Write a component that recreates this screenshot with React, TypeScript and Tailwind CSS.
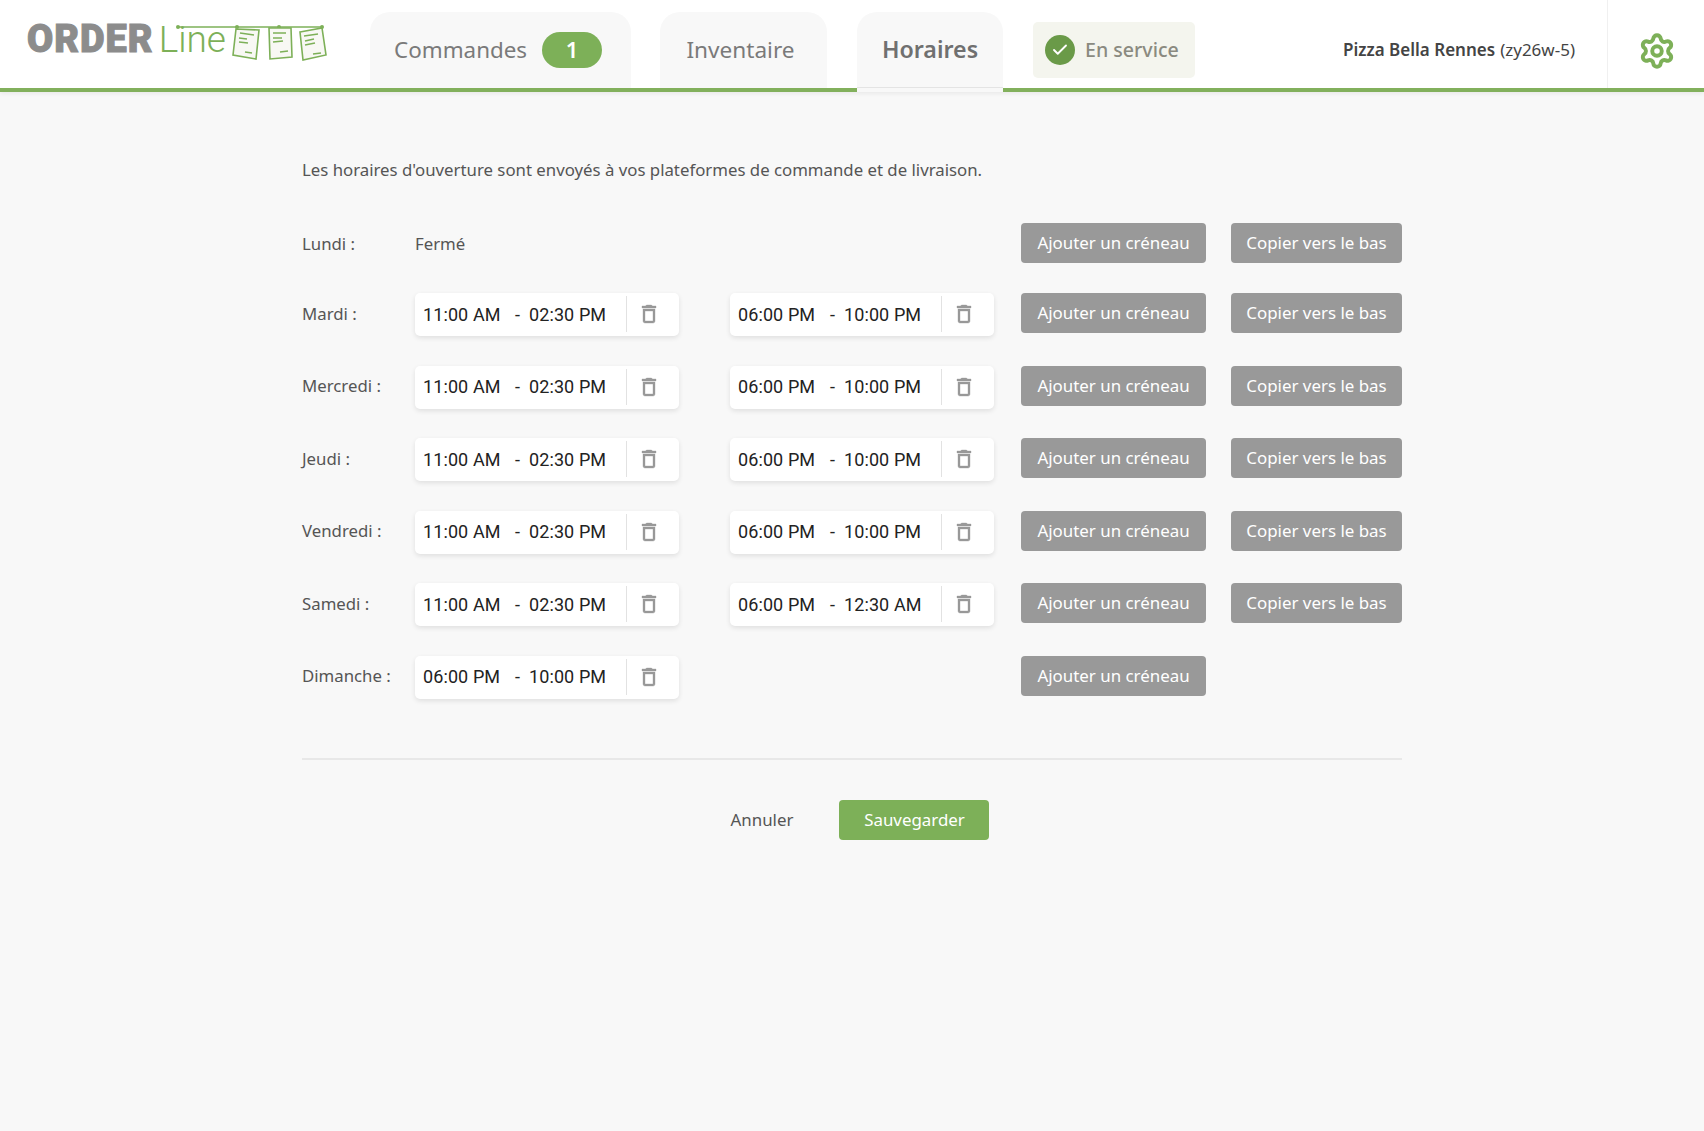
import { Check, Settings } from "lucide-react";

const sans = "font-['Noto_Sans','Open_Sans',sans-serif]";

interface Slot {
  from: string;
  to: string;
}

interface Day {
  label: string;
  slots: Slot[];
  copy: boolean;
}

const lunch = { from: "11:00 AM", to: "02:30 PM" };
const dinner = { from: "06:00 PM", to: "10:00 PM" };

const days: Day[] = [
  { label: "Lundi :", slots: [], copy: true },
  { label: "Mardi :", slots: [lunch, dinner], copy: true },
  { label: "Mercredi :", slots: [lunch, dinner], copy: true },
  { label: "Jeudi :", slots: [lunch, dinner], copy: true },
  { label: "Vendredi :", slots: [lunch, dinner], copy: true },
  { label: "Samedi :", slots: [lunch, { from: "06:00 PM", to: "12:30 AM" }], copy: true },
  { label: "Dimanche :", slots: [dinner], copy: false },
];

function Logo() {
  return (
    <div className="relative h-[88px] w-[370px] shrink-0">
      <div className="flex items-baseline pl-[27px] pt-[16px] font-['Roboto',sans-serif] leading-[46px]">
        <span className="text-[38px] font-black tracking-[1px] text-[#8c8c8c] [-webkit-text-stroke:1px_#8c8c8c]">
          ORDER
        </span>
        <span className="ml-[5px] text-[37px] font-light text-[#7db058]">Line</span>
      </div>
      <svg
        className="absolute left-0 top-0"
        width="340"
        height="70"
        viewBox="0 0 340 70"
        fill="none"
        stroke="#7db058"
      >
        <path d="M178 27H322" strokeWidth="1.5" />
        <g fill="#7db058" stroke="none">
          <circle cx="178" cy="27" r="2" />
          <circle cx="237" cy="27" r="2" />
          <circle cx="279" cy="27" r="2" />
          <circle cx="322" cy="27" r="2" />
        </g>
        <g strokeWidth="1.6" fill="#f8f8f4">
          <path d="M236 29L259 30L256 59L233 55Z" />
          <path d="M269 28L291 28L292 57L270 59Z" />
          <path d="M300 32L322 28L326 55L303 60Z" />
        </g>
        <g strokeWidth="1.6">
          <path d="M240 33L254 35M239 38L247 39M239 42L248 43M245 52L252 53" />
          <path d="M273 33L286 33M273 38L282 38M273 42L283 41M280 52L288 51" />
          <path d="M304 36L318 34M305 41L314 39M305 45L315 43M313 54L321 53" />
        </g>
      </svg>
    </div>
  );
}

function TrashIcon() {
  return (
    <svg width="24" height="24" viewBox="0 0 24 24" fill="#999999" stroke="#999999" strokeWidth="0.35">
      <path d="M6 19c0 1.1.9 2 2 2h8c1.1 0 2-.9 2-2V7H6v12zM8 9h8v10H8V9zm7.5-5l-1-1h-5l-1 1H5v2h14V4h-3.5z" />
    </svg>
  );
}

function SlotCard({ slot }: { slot: Slot }) {
  return (
    <div className="flex h-[43px] w-[264px] items-center rounded-[5px] bg-white pb-[1px] pl-[8px] shadow-[0_2px_5px_rgba(0,0,0,0.1)]">
      <div className="flex flex-1 items-center font-['Roboto',sans-serif] text-[18px] tracking-[0.1px] text-[#222222]">
        <span className="w-[92px]">{slot.from}</span>
        <span className="w-[14px]">-</span>
        <span>{slot.to}</span>
      </div>
      <div className="flex h-[36px] w-[53px] items-center justify-center border-l border-[#e2e2e2] pr-[8px]">
        <TrashIcon />
      </div>
    </div>
  );
}

function GreyButton({ label, className }: { label: string; className: string }) {
  return (
    <button
      className={`flex h-[40px] items-center justify-center rounded-[4px] bg-[#999999] text-[16.9px] text-white ${className}`}
    >
      {label}
    </button>
  );
}

function DayRow({ day }: { day: Day }) {
  const closed = day.slots.length === 0;
  return (
    <div className={`flex items-start ${closed ? "mb-[30px] h-[40px]" : "mb-[30px] h-[42.5px]"}`}>
      <div className="flex h-[41px] w-[113px] shrink-0 items-center text-[16.8px] text-[#555555]">{day.label}</div>
      <div className="flex w-[579px] shrink-0 gap-[51px]">
        {closed ? (
          <span className="flex h-[41px] items-center text-[16.8px] text-[#555555]">Fermé</span>
        ) : (
          day.slots.map((s, i) => <SlotCard key={i} slot={s} />)
        )}
      </div>
      <div className="ml-[27px] flex gap-[25px]">
        <GreyButton label="Ajouter un créneau" className="w-[185px]" />
        {day.copy && <GreyButton label="Copier vers le bas" className="w-[171px]" />}
      </div>
    </div>
  );
}

export default function App() {
  return (
    <div className={`min-h-[1131px] bg-[#f8f8f8] ${sans}`}>
      <header className="relative flex h-[92px] border-b-4 border-[#82b05c] bg-white pt-[12px] shadow-[0_2px_4px_rgba(0,0,0,0.06)]">
        <div className="absolute left-0 top-0">
          <Logo />
        </div>
        <div className="ml-[370px] flex gap-[29px]">
          <div className="flex h-[76px] w-[261px] items-center justify-between rounded-t-[20px] bg-[#f8f8f8] pb-[1px] pl-[24px] pr-[29px] text-[22.4px] text-[#7a7a7a]">
            <span>Commandes</span>
            <span className="flex h-[36px] w-[60px] items-center justify-center rounded-[18px] bg-[#7db058] text-[22px] font-semibold text-white">
              1
            </span>
          </div>
          <div className="flex h-[76px] w-[167px] items-center justify-center rounded-t-[20px] bg-[#f8f8f8] pb-[1px] pr-[6px] text-[22.6px] text-[#7a7a7a]">
            Inventaire
          </div>
          <div className="relative z-10 ml-[1px] h-[80px] w-[146px] rounded-t-[20px] bg-[#f8f8f8] text-[23.2px] font-semibold text-[#707070]">
            <div className="flex h-[76px] items-center justify-center border-b border-[#e4e4e4] pb-[1px]">Horaires</div>
          </div>
        </div>
        <div className="ml-[30px] mt-[10px] flex h-[56px] w-[162px] items-center gap-[10px] rounded-[5px] bg-[#f4f5ee] pl-[12px]">
          <span className="flex h-[30px] w-[30px] items-center justify-center rounded-full bg-[#6a9a48]">
            <Check size={18} strokeWidth={2.5} color="#ffffff" />
          </span>
          <span className="text-[19.6px] font-medium text-[#8a8a80]">En service</span>
        </div>
        <div className="absolute bottom-0 right-[97px] top-0 flex items-center pr-[32px] pt-[11px] text-[17px] text-[#444444]">
          <span className="font-semibold">Pizza Bella Rennes</span>
          <span className="ml-[5px]">(zy26w-5)</span>
        </div>
        <div className="absolute bottom-0 right-0 top-0 flex w-[97px] items-center justify-center border-l border-[#f0f0f0] pl-[2px] pt-[13px]">
          <Settings size={38} strokeWidth={2.5} color="#7db058" />
        </div>
      </header>

      <main className="mx-auto w-[1100px] pt-[66px]">
        <p className="mb-[41px] text-[16.8px] leading-[24px] text-[#555555]">
          Les horaires d'ouverture sont envoyés à vos plateformes de commande et de livraison.
        </p>
        {days.map((d) => (
          <DayRow key={d.label} day={d} />
        ))}
        <div className="mt-[60px] border-t-2 border-[#e8e8e8]" />
        <div className="mt-[40px] flex items-center justify-center pl-[16px]">
          <button className="mr-[46px] text-[16.9px] text-[#555555]">Annuler</button>
          <button className="flex h-[40px] w-[150px] items-center justify-center rounded-[4px] bg-[#7db058] text-[16.9px] text-white">
            Sauvegarder
          </button>
        </div>
      </main>
    </div>
  );
}
